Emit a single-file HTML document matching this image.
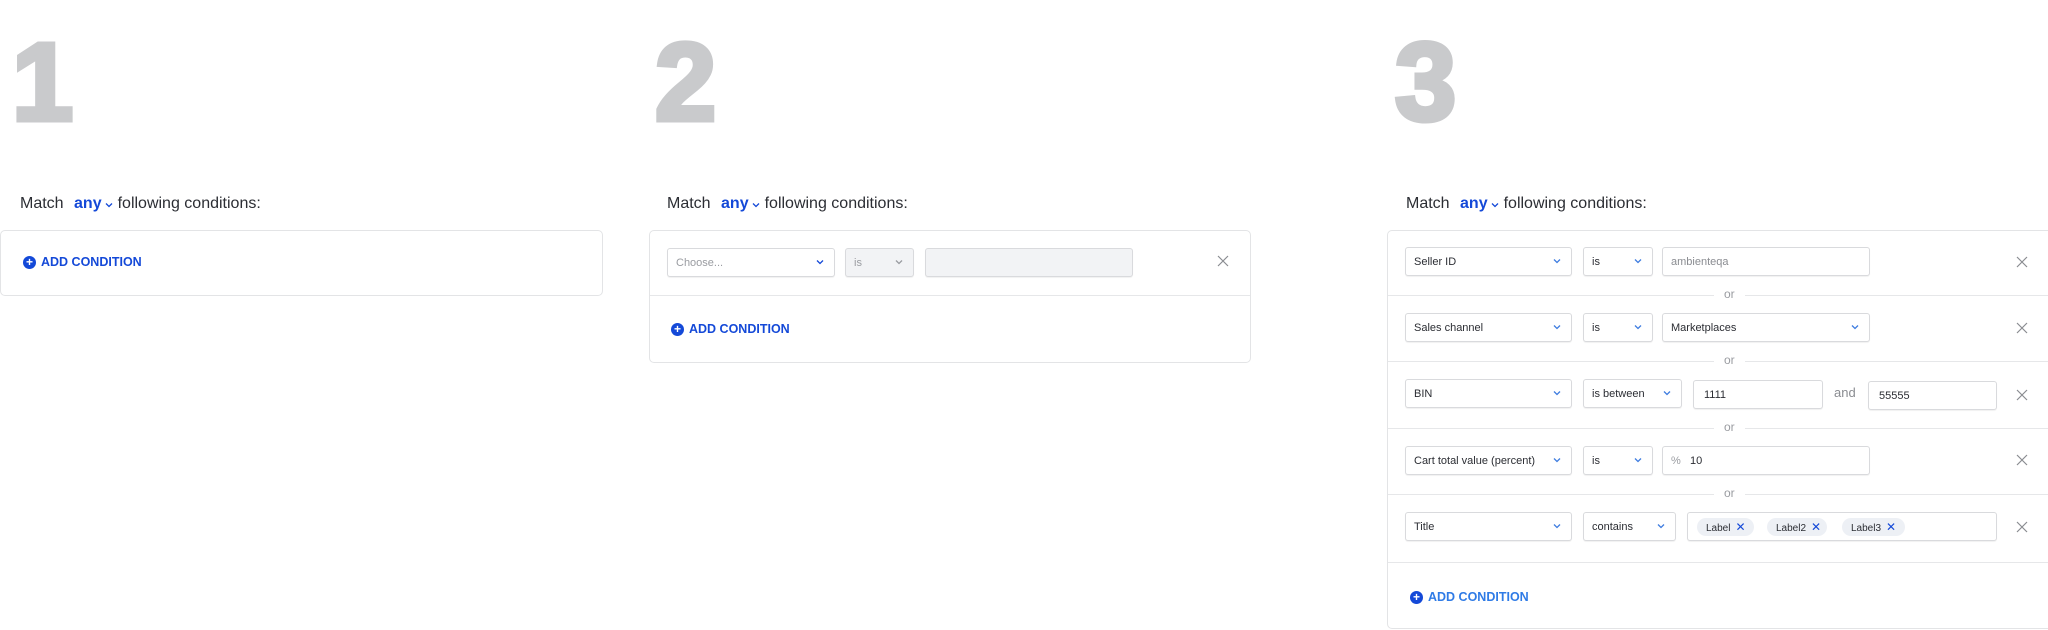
<!DOCTYPE html>
<html><head><meta charset="utf-8"><style>
*{box-sizing:border-box;margin:0;padding:0}
body{width:2048px;height:630px;background:#fff;position:relative;overflow:hidden;font-family:"Liberation Sans",sans-serif;color:#2b2d33}
.a{position:absolute}
.dig{position:absolute;top:28px;font-size:110px;font-weight:bold;color:#c9cacc;line-height:1;-webkit-text-stroke:5px #c9cacc}
.match{position:absolute;top:195px;font-size:16px;color:#2b2d33;white-space:nowrap}
.match b{color:#1449d8;margin:0 3px 0 6px}
.match svg{vertical-align:middle;margin-right:5px;position:relative;top:1px}
.box{position:absolute;border:1px solid #e3e4e6;border-radius:5px;background:#fff}
.add{position:absolute;font-size:12.5px;font-weight:bold;color:#1449d8;white-space:nowrap;display:flex;align-items:center;gap:5px}
.add span.c{width:13px;height:13px;border-radius:50%;background:#1449d8;color:#fff;font-size:12px;line-height:13px;text-align:center;font-weight:bold}
.f{position:absolute;height:29px;border:1px solid #d9dadd;border-radius:3px;box-shadow:0 1px 1px rgba(0,0,0,.06);font-size:11px;line-height:28px;padding-left:8px;color:#2b2d33;background:#fff;white-space:nowrap}
.f .v{position:absolute;right:10px;top:10px;width:8px;height:6px}
.g{background:#f2f3f5;color:#9a9ca1}
.x{position:absolute;width:12px;height:12px}
.hr{position:absolute;height:1px;background:#e6e7e9}
.or{position:absolute;font-size:12px;color:#9a9ca1;background:#fff;padding:0 10px}
.tag{position:absolute;top:5px;height:18px;border-radius:9px;background:#edf0f5;font-size:10px;line-height:18px;padding-left:9px;color:#2b2d33}
.tag em{font-style:normal;color:#1449d8;font-size:12px;margin-left:5px}
</style></head><body>
<svg width="0" height="0" style="position:absolute"><defs>
<symbol id="ch" viewBox="0 0 8 6"><path d="M1 1.5 4 4.5 7 1.5" fill="none" stroke="currentColor" stroke-width="1.3"/></symbol>
<symbol id="xx" viewBox="0 0 12 12"><path d="M1 1 11 11M11 1 1 11" fill="none" stroke="#8a8c91" stroke-width="1.2"/></symbol>
</defs></svg>
<div class="dig" style="left:12px">1</div>
<div class="dig" style="left:655px">2</div>
<div class="dig" style="left:1395px">3</div>

<div class="match" style="left:20px">Match <b>any</b><svg width="8" height="6" style="color:#1449d8"><use href="#ch"/></svg>following conditions:</div>
<div class="match" style="left:667px">Match <b>any</b><svg width="8" height="6" style="color:#1449d8"><use href="#ch"/></svg>following conditions:</div>
<div class="match" style="left:1406px">Match <b>any</b><svg width="8" height="6" style="color:#1449d8"><use href="#ch"/></svg>following conditions:</div>

<div class="box" style="left:0;top:230px;width:603px;height:66px"></div>
<div class="add" style="left:23px;top:255px"><span class="c">+</span>ADD CONDITION</div>

<div class="box" style="left:649px;top:230px;width:602px;height:133px"></div>
<div class="hr" style="left:650px;top:295px;width:600px"></div>
<div class="f" style="left:667px;top:248px;width:168px;color:#9a9ca1">Choose...<svg class="v" style="color:#1449d8"><use href="#ch"/></svg></div>
<div class="f g" style="left:845px;top:248px;width:69px">is<svg class="v" style="color:#9a9ca1"><use href="#ch"/></svg></div>
<div class="f g" style="left:925px;top:248px;width:208px"></div>
<svg class="x" style="left:1217px;top:255px"><use href="#xx"/></svg>
<div class="add" style="left:671px;top:322px"><span class="c">+</span>ADD CONDITION</div>

<div class="box" style="left:1387px;top:230px;width:670px;height:399px"></div>
<div class="hr" style="left:1388px;top:295px;width:660px"></div><div class="or" style="left:1714px;top:287px">or</div>
<div class="hr" style="left:1388px;top:361px;width:660px"></div><div class="or" style="left:1714px;top:353px">or</div>
<div class="hr" style="left:1388px;top:428px;width:660px"></div><div class="or" style="left:1714px;top:420px">or</div>
<div class="hr" style="left:1388px;top:494px;width:660px"></div><div class="or" style="left:1714px;top:486px">or</div>
<div class="hr" style="left:1388px;top:562px;width:660px"></div>

<div class="f" style="left:1405px;top:247px;width:167px">Seller ID<svg class="v" style="color:#3f7de0"><use href="#ch"/></svg></div>
<div class="f" style="left:1583px;top:247px;width:70px">is<svg class="v" style="color:#3f7de0"><use href="#ch"/></svg></div>
<div class="f" style="left:1662px;top:247px;width:208px;color:#8a8c91">ambienteqa</div>
<svg class="x" style="left:2016px;top:256px"><use href="#xx"/></svg>

<div class="f" style="left:1405px;top:313px;width:167px">Sales channel<svg class="v" style="color:#3f7de0"><use href="#ch"/></svg></div>
<div class="f" style="left:1583px;top:313px;width:70px">is<svg class="v" style="color:#3f7de0"><use href="#ch"/></svg></div>
<div class="f" style="left:1662px;top:313px;width:208px">Marketplaces<svg class="v" style="color:#3f7de0"><use href="#ch"/></svg></div>
<svg class="x" style="left:2016px;top:322px"><use href="#xx"/></svg>

<div class="f" style="left:1405px;top:379px;width:167px">BIN<svg class="v" style="color:#3f7de0"><use href="#ch"/></svg></div>
<div class="f" style="left:1583px;top:379px;width:99px">is between<svg class="v" style="color:#3f7de0"><use href="#ch"/></svg></div>
<div class="f" style="left:1693px;top:380px;width:130px;padding-left:10px">1111</div>
<div class="a" style="left:1834px;top:385px;font-size:13px;color:#8a8c91">and</div>
<div class="f" style="left:1868px;top:381px;width:129px;padding-left:10px">55555</div>
<svg class="x" style="left:2016px;top:389px"><use href="#xx"/></svg>

<div class="f" style="left:1405px;top:446px;width:167px">Cart total value (percent)<svg class="v" style="color:#3f7de0"><use href="#ch"/></svg></div>
<div class="f" style="left:1583px;top:446px;width:70px">is<svg class="v" style="color:#3f7de0"><use href="#ch"/></svg></div>
<div class="f" style="left:1662px;top:446px;width:208px"><span style="color:#9a9ca1">%</span>&nbsp;&nbsp;&nbsp;10</div>
<svg class="x" style="left:2016px;top:454px"><use href="#xx"/></svg>

<div class="f" style="left:1405px;top:512px;width:167px">Title<svg class="v" style="color:#3f7de0"><use href="#ch"/></svg></div>
<div class="f" style="left:1583px;top:512px;width:93px">contains<svg class="v" style="color:#3f7de0"><use href="#ch"/></svg></div>
<div class="f" style="left:1687px;top:512px;width:310px">
<div class="tag" style="left:9px;width:57px">Label<em>✕</em></div>
<div class="tag" style="left:79px;width:60px">Label2<em>✕</em></div>
<div class="tag" style="left:154px;width:63px">Label3<em>✕</em></div>
</div>
<svg class="x" style="left:2016px;top:521px"><use href="#xx"/></svg>

<div class="add" style="left:1410px;top:590px;color:#2f7be6"><span class="c" style="background:#1449d8">+</span>ADD CONDITION</div>
</body></html>
